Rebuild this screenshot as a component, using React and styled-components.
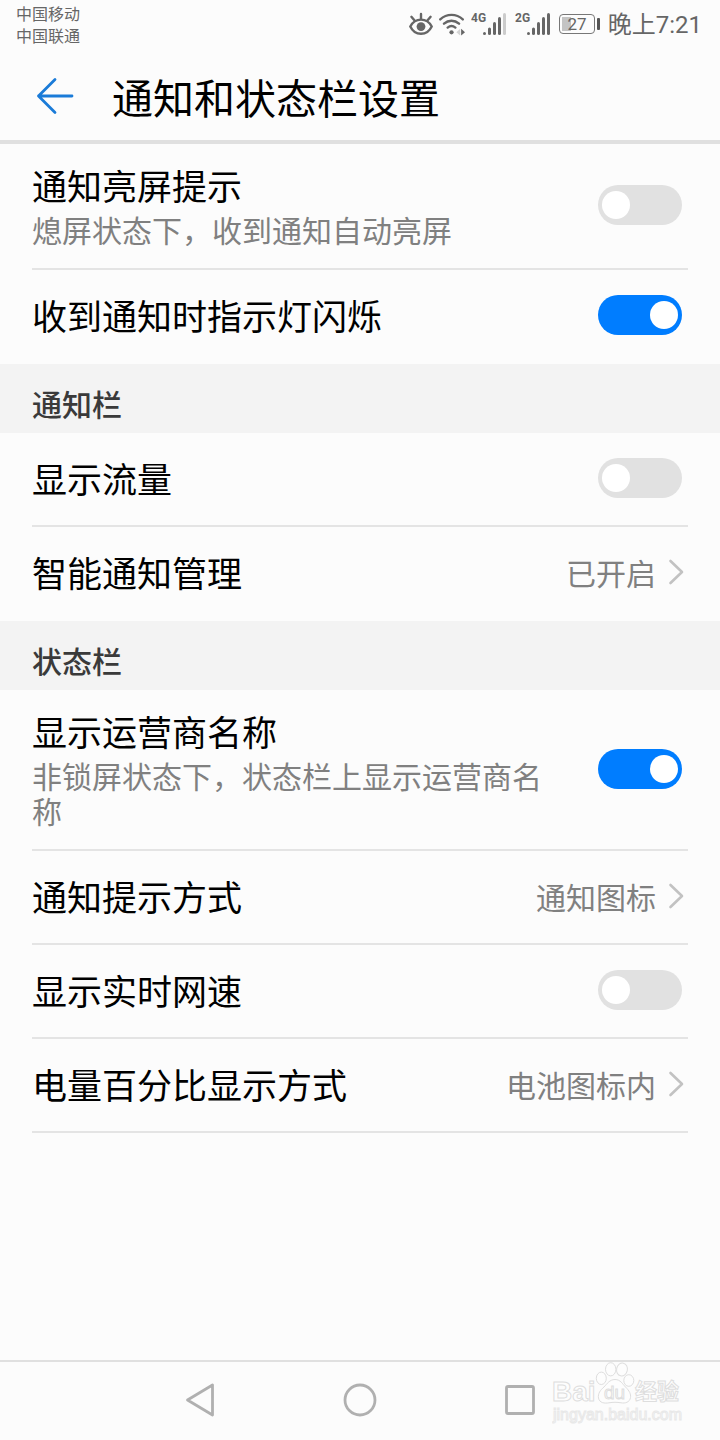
import React, { useState } from 'react';
import styled, { createGlobalStyle } from 'styled-components';

const GlobalStyle = createGlobalStyle`
  * {
    box-sizing: border-box;
  }

  body {
    margin: 0;
    background: #fcfcfc;
    color: #000;
    font-family: Roboto, "Noto Sans CJK SC", sans-serif;
  }

  button, input {
    font-family: inherit;
  }
`;

const Page = styled.div`
  display: flex;
  flex-direction: column;
  min-height: 100vh;
`;

const StatusBar = styled.div`
  display: flex;
  justify-content: space-between;
  align-items: flex-start;
  height: 52px;
  padding: 4px 18px 0 16px;
  color: #666;
`;

const Carriers = styled.div`
  font-size: 16px;
  line-height: 22px;
`;

const StatusIcons = styled.div`
  display: flex;
  align-items: center;
  gap: 8px;
  height: 40px;
`;

const Wireless = styled.span`
  display: flex;
  align-items: center;
  gap: 6px;
`;

const Clock = styled.span`
  padding-top: 2px;
  font-size: 24px;
  line-height: 38px;
`;

const Header = styled.header`
  display: flex;
  align-items: center;
  gap: 36px;
  height: 92px;
  padding: 0 34px;
  border-bottom: 4px solid #e0e0e0;
`;

const BackButton = styled.button`
  display: flex;
  padding: 0;
  border: 0;
  background: none;
  cursor: pointer;
`;

const Title = styled.h1`
  margin: 0;
  padding-top: 8px;
  font-size: 41px;
  font-weight: 400;
  line-height: 60px;
`;

const Main = styled.main`
  flex: 1;
`;

const SectionTitle = styled.h2`
  margin: 0;
  padding: 14px 32px 0;
  background: #f3f3f3;
  color: #3a3a3a;
  font-size: 30px;
  font-weight: 500;
  line-height: 55px;
`;

const List = styled.ul`
  margin: 0;
  padding: 0 32px;
  list-style: none;
`;

const Item = styled.li`
  border-bottom: 2px solid ${({ $divider }) => ($divider ? '#e4e4e4' : 'transparent')};
`;

const SwitchRow = styled.label`
  display: flex;
  align-items: center;
  justify-content: space-between;
  gap: 32px;
  min-height: 92px;
  padding: 0 6px 2px 0;
  cursor: pointer;
`;

const LinkRow = styled.button`
  display: flex;
  align-items: center;
  width: 100%;
  min-height: 92px;
  padding: 0 4px 2px 0;
  border: 0;
  background: none;
  color: inherit;
  text-align: left;
  cursor: pointer;
`;

const Texts = styled.span`
  display: block;
  flex: 1;
  padding: ${({ $hasHint }) => ($hasHint ? '20px 0 17px' : '8px 0 0')};
`;

const Label = styled.span`
  display: block;
  font-size: 35px;
  line-height: 50px;
`;

const Hint = styled.span`
  display: block;
  color: #808080;
  font-size: 30px;
  line-height: 35px;
`;

const Value = styled.span`
  margin-right: 12px;
  padding-top: 6px;
  color: #808080;
  font-size: 30px;
  line-height: 50px;
`;

const Switch = styled.input`
  appearance: none;
  display: flex;
  flex: none;
  justify-content: flex-start;
  width: 84px;
  height: 40px;
  margin: 0;
  padding: 6px 4px;
  border-radius: 20px;
  background: #e1e1e1;
  cursor: pointer;

  &::before {
    content: "";
    width: 28px;
    height: 28px;
    border-radius: 50%;
    background: #fff;
  }

  &:checked {
    justify-content: flex-end;
    background: #007dff;
  }
`;

const NavBar = styled.nav`
  position: relative;
  display: flex;
  justify-content: center;
  align-items: center;
  gap: 120px;
  height: 80px;
  padding-bottom: 2px;
  border-top: 2px solid #e0e0e0;
`;

const NavButton = styled.button`
  display: flex;
  padding: 0;
  border: 0;
  background: none;
  cursor: pointer;
`;

const Watermark = styled.svg`
  position: absolute;
  right: 36px;
  top: -2px;
  pointer-events: none;
`;

const groups = [
  {
    items: [
      { label: '通知亮屏提示', hint: '熄屏状态下，收到通知自动亮屏', on: false },
      { label: '收到通知时指示灯闪烁', on: true },
    ],
  },
  {
    title: '通知栏',
    items: [
      { label: '显示流量', on: false },
      { label: '智能通知管理', value: '已开启' },
    ],
  },
  {
    title: '状态栏',
    items: [
      { label: '显示运营商名称', hint: '非锁屏状态下，状态栏上显示运营商名称', on: true },
      { label: '通知提示方式', value: '通知图标' },
      { label: '显示实时网速', on: false },
      { label: '电量百分比显示方式', value: '电池图标内' },
    ],
  },
];

const EyeIcon = () => (
  <svg width="24" height="24" viewBox="0 0 24 24" fill="none" stroke="#666" strokeWidth="2.4" strokeLinecap="round">
    <path d="M1.3 14.5C3.6 10 7.4 7.6 12 7.6s8.4 2.4 10.7 6.9C20.4 19.4 16.6 21.8 12 21.8S3.6 19.4 1.3 14.5Z" />
    <path d="M12 7V2M5.6 8.600 2.400 4.800M18.400 8.600l3.200-3.800" />
    <circle cx="12" cy="14.600" r="4.400" fill="#666" stroke="none" />
  </svg>
);

const WifiIcon = () => (
  <svg width="26" height="24" viewBox="0 0 27 24" fill="none" stroke="#666" strokeWidth="2.500" strokeLinecap="round">
    <path d="M1.300 7.200C8 1 18 1 24.700 7.200M5.200 11.600c4.600-4 11-4 15.600 0M9 15.700c2.400-2 5.600-2 8 0" />
    <circle cx="13" cy="20.600" r="2.200" fill="#666" stroke="none" />
    <path d="M22 17v7l-4-3.500z" fill="#d4d4d4" stroke="none" />
    <path d="M23 17v7l4-3.500z" fill="#666" stroke="none" />
  </svg>
);

const SignalIcon = ({ network, level }) => (
  <svg width="36" height="24" viewBox="0 0 36 24">
    <text x="0" y="10" fill="#666" fontFamily="Roboto, sans-serif" fontWeight="700" fontSize="12">
      {network}
    </text>
    {[20, 15.500, 10, 5, 1].map((y, i) => (
      <rect key={y} x={12 + i * 5} y={y} width="3" height={23 - y} rx="1.500" fill={i < level ? '#666' : '#ccc'} />
    ))}
  </svg>
);

const BatteryIcon = () => (
  <svg width="41" height="24" viewBox="0 0 41 24">
    <rect x="0.500" y="2.500" width="35" height="19" rx="3.500" fill="none" stroke="#777" />
    <rect x="3" y="5" width="9" height="14" fill="#c4c4c4" />
    <rect x="38" y="6" width="3" height="12" rx="1" fill="#555" />
    <text x="18" y="18" textAnchor="middle" fill="#666" fontFamily="Roboto, sans-serif" fontSize="17">
      27
    </text>
  </svg>
);

const BackIcon = () => (
  <svg width="42" height="42" viewBox="0 0 42 42" fill="none" stroke="#1a7bd8" strokeWidth="2.800" strokeLinecap="round" strokeLinejoin="round">
    <path d="M38 21H4.500M21 4.500 4.500 21 21 37.500" />
  </svg>
);

const Chevron = () => (
  <svg width="16" height="26" viewBox="0 0 16 26" fill="none" stroke="#c2c2c2" strokeWidth="2.600" strokeLinecap="round" strokeLinejoin="round">
    <path d="M2.500 2l11.500 11L2.500 24" />
  </svg>
);

const SettingItem = ({ item, divider }) => {
  const [on, setOn] = useState(item.on);

  if (item.value) {
    return (
      <Item $divider={divider}>
        <LinkRow type="button">
          <Texts>
            <Label>{item.label}</Label>
          </Texts>
          <Value>{item.value}</Value>
          <Chevron />
        </LinkRow>
      </Item>
    );
  }

  return (
    <Item $divider={divider}>
      <SwitchRow>
        <Texts $hasHint={!!item.hint}>
          <Label>{item.label}</Label>
          {item.hint && <Hint>{item.hint}</Hint>}
        </Texts>
        <Switch type="checkbox" role="switch" checked={on} onChange={() => setOn(!on)} />
      </SwitchRow>
    </Item>
  );
};

const App = () => {
  return (
    <Page lang="zh-CN">
      <GlobalStyle />
      <StatusBar>
        <Carriers>
          <div>中国移动</div>
          <div>中国联通</div>
        </Carriers>
        <StatusIcons>
          <Wireless>
            <EyeIcon />
            <WifiIcon />
            <SignalIcon network="4G" level={4} />
          </Wireless>
          <SignalIcon network="2G" level={5} />
          <BatteryIcon />
          <Clock>晚上7:21</Clock>
        </StatusIcons>
      </StatusBar>

      <Header>
        <BackButton type="button" aria-label="返回">
          <BackIcon />
        </BackButton>
        <Title>通知和状态栏设置</Title>
      </Header>

      <Main>
        {groups.map((group, g) => (
          <section key={g}>
            {group.title && <SectionTitle>{group.title}</SectionTitle>}
            <List>
              {group.items.map((item, i) => (
                <SettingItem
                  key={item.label}
                  item={item}
                  divider={i < group.items.length - 1 || g === groups.length - 1}
                />
              ))}
            </List>
          </section>
        ))}
      </Main>

      <NavBar>
        <NavButton type="button" aria-label="后退">
          <svg width="40" height="40" viewBox="0 0 40 40" fill="none" stroke="#b0b0b0" strokeWidth="2.800" strokeLinejoin="round">
            <path d="M32.500 5v30L7.500 20z" />
          </svg>
        </NavButton>
        <NavButton type="button" aria-label="主页">
          <svg width="40" height="40" viewBox="0 0 40 40" fill="none" stroke="#b0b0b0" strokeWidth="2.800">
            <circle cx="20" cy="20" r="15" />
          </svg>
        </NavButton>
        <NavButton type="button" aria-label="最近任务">
          <svg width="40" height="40" viewBox="0 0 40 40" fill="none" stroke="#b0b0b0" strokeWidth="2.800">
            <rect x="6.500" y="6.500" width="27" height="27" rx="1.500" />
          </svg>
        </NavButton>
        <Watermark width="132" height="66" viewBox="0 0 132 66" fill="#fdfdfd" stroke="#dedede" strokeWidth="1">
          <text x="0" y="41" fontFamily='"Liberation Sans", sans-serif' fontWeight="700" fontSize="28">
            Bai
          </text>
          <ellipse cx="49.300" cy="18.300" rx="5" ry="6.200" />
          <ellipse cx="58.700" cy="9.300" rx="5.200" ry="6.600" />
          <ellipse cx="70" cy="9.500" rx="5.400" ry="6.500" transform="rotate(12 70 9.500)" />
          <ellipse cx="76.800" cy="20.500" rx="5" ry="5.800" />
          <path d="M63 19.500c5.500 0 7.500 4.500 10.500 7.500 4 4 5.500 7 5 10.500-.8 5-5.500 6-9.500 5.300-4-.7-8-.7-12 0-4.500.8-9.500.2-10.500-4.800-.8-4.500 2-8 5.500-11 3-3 5.500-7.500 11-7.500z" />
          <text x="52" y="39" fontFamily='"Liberation Sans", sans-serif' fontSize="19">
            du
          </text>
          <text x="83" y="39" fontFamily='"Noto Sans CJK SC", sans-serif' fontWeight="700" fontSize="22">
            经验
          </text>
          <text x="1" y="60" fontFamily='"Liberation Sans", sans-serif' fontSize="16" stroke="#e8e8e8">
            jingyan.baidu.com
          </text>
        </Watermark>
      </NavBar>
    </Page>
  );
};

export default App;
